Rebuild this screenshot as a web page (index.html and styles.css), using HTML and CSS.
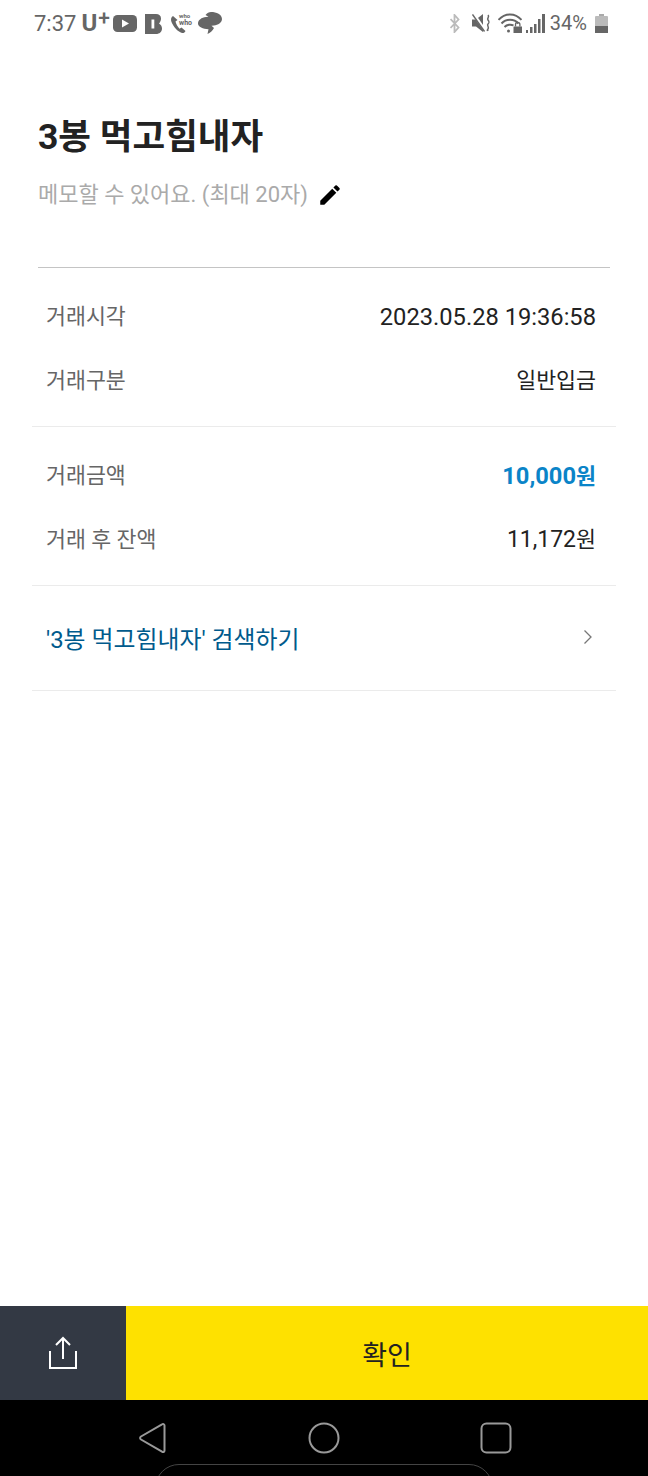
FILE: index.html
```html
<!DOCTYPE html>
<html>
<head>
    <title>거래 상세</title>
    <link rel="stylesheet" href="styles.css">
</head>
<body>
    <div class="screen">
        <div class="status-bar">
            <div class="status-left">
                <span class="clock">7:37</span>
                <span class="uplus">U<span class="plus">+</span></span>
                <svg class="st-yt" width="24" height="17" viewBox="0 0 24 17"><rect x="0" y="0" width="24" height="17" rx="4.500" fill="#666"/><path d="M9 4.500v8l7-4z" fill="#fff"/></svg>
                <svg class="st-b" width="17" height="20" viewBox="0 0 17 20"><path d="M0 0h11c3 0 5 1.500 5 4.500 0 2-.8 3.800-2 5 1.800 1 3 2.800 3 5 0 3.300-2.500 5.500-6 5.500H0z" fill="#666"/><rect x="6.500" y="5.500" width="2.800" height="9" fill="#fff"/></svg>
                <svg class="st-who" width="24" height="22" viewBox="0 0 24 22"><path d="M3 4C1 5 .5 7.500 1.500 10c2 5 6 9.500 10.500 11 1.500.3 3-.5 3.500-2l-4-3.500-2 1.200C7.500 14.500 6 12 5.500 9.500L7.500 8z" fill="#666"/><text x="9" y="6" class="who-text">who</text><text x="9" y="13" class="who-text big">who</text></svg>
                <svg class="st-chat" width="24" height="22" viewBox="0 0 24 22"><path d="M13 0c5.500 0 11 2.500 11 7 0 3.500-4 6-8 6.500l-2.500.2 2.500 2.300c-1.500 3-4 4.800-6.500 6l1-4.700C5 17 0 15 0 11.500 0 8 3.500 5.500 8 5l2.500-.2L7.500 3C9 1 11 .2 13 0z" fill="#666"/></svg>
            </div>
            <div class="status-right">
                <svg class="st-bt" width="10" height="19" viewBox="0 0 10 19"><path d="M.5 5l8 8.500-4 4.500V1l4 4.500-8 8.500" fill="none" stroke="#bbb" stroke-width="1.800"/></svg>
                <svg class="st-mute" width="19" height="18" viewBox="0 0 19 18"><path d="M0 5.500h4L11 0v18l-7-5.500H0z" fill="#666"/><path d="M1.500 0l12 17" stroke="#fff" stroke-width="3"/><path d="M.5 .5l12 17" stroke="#666" stroke-width="1.400"/><path d="M16 1c2 2-1.500 3 0 5s1.500 2.500 0 4 1.500 3 0 5 0 1.500 0 2" fill="none" stroke="#666" stroke-width="1.500"/></svg>
                <svg class="st-wifi" width="24" height="20" viewBox="0 0 24 20"><path d="M0.500 7c6-7.500 17-7.500 23 0M3.500 10.500c4.500-5 12.500-5 17 0M6.500 14c2.500-2.500 6.500-3 9-1.500" fill="none" stroke="#666" stroke-width="2"/><circle cx="10.500" cy="18" r="1.500" fill="#666"/><rect x="15.500" y="13.500" width="8.500" height="6.500" fill="#666"/><path d="M17.500 13.500v-2a2.200 2.200 0 0 1 4.400 0v2" fill="none" stroke="#666" stroke-width="1.300"/></svg>
                <svg class="st-signal" width="19" height="19" viewBox="0 0 19 19"><rect x="0" y="16" width="2" height="3" fill="#666"/><rect x="4" y="13" width="2.500" height="6" fill="#666"/><rect x="8" y="10" width="2.500" height="9" fill="#666"/><rect x="12" y="5" width="2.500" height="14" fill="#666"/><rect x="16" y="0" width="3" height="19" fill="#666"/></svg>
                <span class="battery-text">34%</span>
                <svg class="st-batt" width="13" height="19" viewBox="0 0 13 19"><rect x="4" y="0" width="5" height="3" fill="#aaa"/><rect x="0" y="2" width="13" height="17" rx="1" fill="#bbb"/><rect x="0" y="12" width="13" height="7" fill="#666"/></svg>
            </div>
        </div>

        <div class="content">
            <div class="head">
                <h1>3봉 먹고힘내자</h1>
                <div class="memo">
                    <span>메모할 수 있어요. (최대 20자)</span>
                    <svg width="26" height="26" viewBox="0 0 24 24"><path d="M3 17.250V21h3.750L17.810 9.940l-3.750-3.750zM20.710 7.040a1 1 0 0 0 0-1.410l-2.340-2.340a1 1 0 0 0-1.410 0l-1.830 1.830 3.750 3.750z" fill="#000"/></svg>
                </div>
            </div>

            <div class="section">
                <div class="row">
                    <span class="label">거래시각</span>
                    <span class="value">2023.05.28 19:36:58</span>
                </div>
                <div class="row">
                    <span class="label">거래구분</span>
                    <span class="value ko">일반입금</span>
                </div>
            </div>

            <div class="section">
                <div class="row">
                    <span class="label">거래금액</span>
                    <span class="value amount">10,000<span class="ko">원</span></span>
                </div>
                <div class="row">
                    <span class="label">거래 후 잔액</span>
                    <span class="value balance">11,172<span class="ko">원</span></span>
                </div>
            </div>

            <div class="search-row">
                <span>'3봉 먹고힘내자' 검색하기</span>
                <svg width="12" height="16" viewBox="0 0 12 16"><path d="M2.500 1.500L9 8l-6.500 6.500" fill="none" stroke="#777" stroke-width="1.300"/></svg>
            </div>
        </div>

        <div class="bottom-bar">
            <div class="share-btn">
                <svg width="30" height="34" viewBox="0 0 30 34"><path d="M15 2v21M8 9l7-7 7 7M2 15v17h26V15" fill="none" stroke="#fff" stroke-width="2"/></svg>
            </div>
            <div class="ok-btn">확인</div>
        </div>

        <div class="nav-bar">
            <div class="nav-icons">
                <svg width="30" height="32" viewBox="0 0 30 32"><path d="M26.500 3.500v25c0 1.500-1.500 2-2.500 1.200L3 17.500c-1.200-.8-1.200-2.200 0-3L24 2.300c1-.7 2.500-.3 2.500 1.200z" fill="none" stroke="#999" stroke-width="2"/></svg>
                <svg width="32" height="32" viewBox="0 0 32 32"><circle cx="16" cy="16" r="14.500" fill="none" stroke="#999" stroke-width="2"/></svg>
                <svg width="32" height="32" viewBox="0 0 32 32"><rect x="1.500" y="1.500" width="29" height="29" rx="5" fill="none" stroke="#999" stroke-width="2"/></svg>
            </div>
            <div class="nav-handle"></div>
        </div>
    </div>
</body>
</html>
```

FILE: styles.css
```css
* {
    box-sizing: border-box;
}
html, body {
    margin: 0;
    height: 100%;
}
body {
    font-family: Roboto, "Noto Sans CJK KR", sans-serif;
    background-color: white;
    color: #222;
}
.screen {
    display: flex;
    flex-direction: column;
    height: 1476px;
    overflow: hidden;
}

/* Status bar */
.status-bar {
    display: flex;
    justify-content: space-between;
    align-items: center;
    height: 46px;
    padding: 0 40px 0 34px;
    color: #666;
}
.status-left, .status-right {
    display: flex;
    align-items: center;
}
.clock {
    font-size: 22px;
}
.uplus {
    display: flex;
    align-items: flex-start;
    margin-left: 5px;
    font-size: 24px;
    font-weight: 700;
    line-height: 24px;
}
.plus {
    margin-top: -5px;
    margin-left: 1px;
    font-size: 21px;
    font-weight: 500;
}
.st-yt {
    margin-left: 3px;
}
.st-b {
    margin-left: 8px;
    margin-top: 2px;
}
.st-who {
    margin-left: 8px;
}
.st-chat {
    margin-left: 4px;
}
.who-text {
    font-size: 6px;
    font-weight: 700;
    fill: #666;
    font-family: Roboto, sans-serif;
}
.who-text.big {
    font-size: 7px;
}
.st-mute {
    margin-left: 12px;
}
.st-wifi {
    margin-left: 7px;
}
.st-signal {
    margin-left: 4px;
}
.battery-text {
    font-size: 20px;
    margin-left: 5px;
}
.st-batt {
    margin-left: 8px;
}

/* Content */
.content {
    flex: 1;
    padding: 0 32px;
}
.head {
    margin: 0 6px;
    padding-top: 65px;
    height: 222px;
    border-bottom: 1px solid #c4c4c4;
}
h1 {
    margin: 0;
    font-size: 35.500px;
    font-weight: 700;
    line-height: 52px;
    color: #222;
}
.memo {
    display: flex;
    align-items: center;
    gap: 9px;
    margin-top: 15px;
    font-size: 22px;
    color: #aaa;
    line-height: 34px;
}
.section {
    padding: 17px 20px 13px 14px;
    border-bottom: 1px solid #ebebeb;
}
.row {
    display: flex;
    justify-content: space-between;
    align-items: center;
    height: 64px;
}
.label {
    color: #666;
    font-size: 21.700px;
    line-height: 30px;
}
.value {
    color: #222;
    font-size: 23.700px;
    line-height: 30px;
}
.ko {
    font-size: 21.700px;
}
.balance {
    font-size: 23px;
}
.amount {
    color: #0a84c8;
    font-weight: 700;
}
.search-row {
    display: flex;
    justify-content: space-between;
    align-items: center;
    height: 105px;
    padding: 0 22px 2px 14px;
    border-bottom: 1px solid #ebebeb;
    font-size: 23.900px;
    color: #005a8c;
}

/* Bottom */
.bottom-bar {
    display: flex;
    height: 94px;
}
.share-btn {
    display: flex;
    align-items: center;
    justify-content: center;
    width: 126px;
    background-color: #333944;
}
.ok-btn {
    flex: 1;
    display: flex;
    align-items: center;
    justify-content: center;
    background-color: #fee100;
    color: #222;
    font-size: 27px;
}
.nav-bar {
    height: 76px;
    background-color: black;
    overflow: hidden;
}
.nav-icons {
    display: flex;
    justify-content: center;
    gap: 140px;
    padding: 22px 0 0 2px;
}
.nav-handle {
    width: 338px;
    height: 30px;
    margin: 10px 0 0 155px;
    border: 1px solid #444;
    border-radius: 24px 24px 0 0;
}
```
